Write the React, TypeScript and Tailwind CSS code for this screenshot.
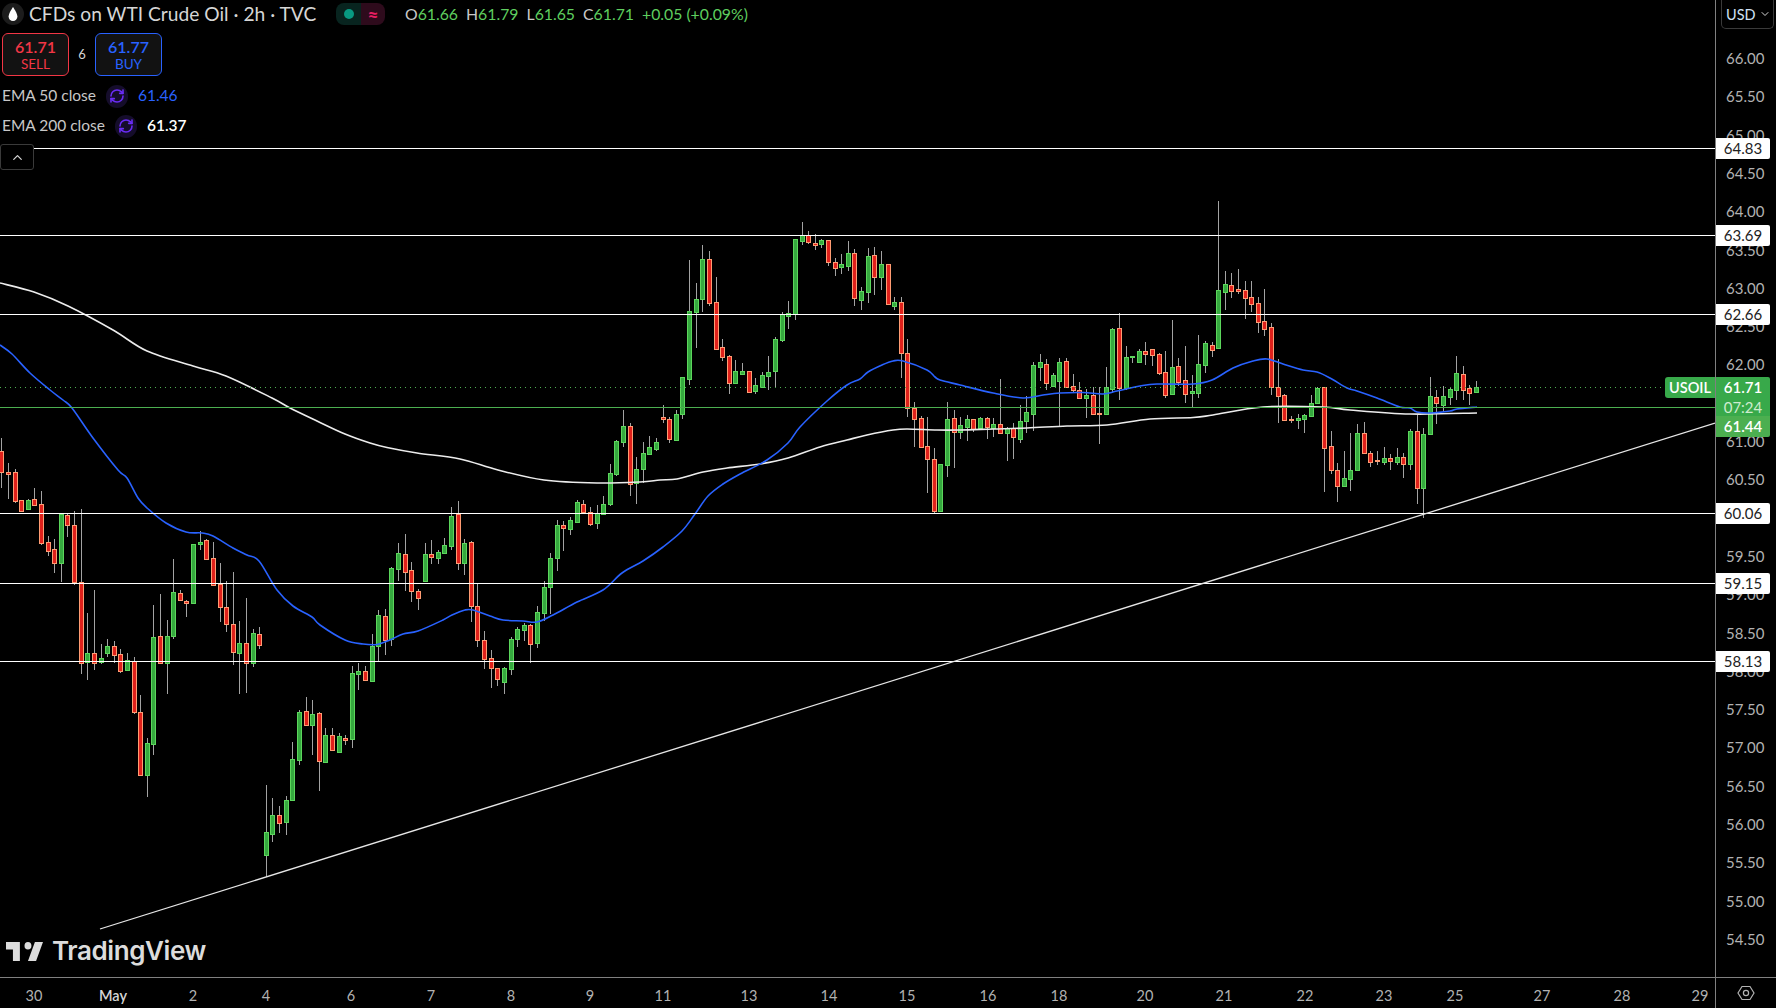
import React from "react";
import { ChevronDown, ChevronUp, RefreshCw } from "lucide-react";

type Row = [number, number, number, number, number, number];
type Candle = { x: number; wt: number; bt: number; bb: number; wb: number; up: boolean };

const batch = (ox: number, oy: number, rows: Row[]): Candle[] =>
  rows.map(([x, wt, bt, bb, wb, c]) => ({
    x: Math.round(ox + x / 3),
    wt: Math.round(oy + wt / 3),
    bt: Math.round(oy + bt / 3),
    bb: Math.round(oy + bb / 3),
    wb: Math.round(oy + wb / 3),
    up: c === 1,
  }));

const candles: Candle[] = [
  ...batch(0, 400, [
    [4, 114, 154, 217, 265, 0], [25, 190, 217, 221, 297, 0], [46, 207, 217, 302, 308, 0], [64, 300, 300, 332, 336, 0],
    [85, 298, 301, 326, 326, 1], [103, 265, 298, 314, 314, 0], [124, 274, 313, 428, 434, 0], [145, 408, 427, 452, 467, 0],
    [163, 418, 448, 488, 518, 0], [184, 343, 343, 488, 545, 1], [202, 343, 346, 374, 410, 0], [223, 334, 376, 545, 555, 0],
    [244, 328, 547, 788, 822, 0], [262, 640, 760, 785, 840, 1], [283, 570, 760, 788, 810, 0], [304, 732, 775, 785, 792, 1],
    [322, 717, 739, 759, 770, 1], [343, 724, 739, 764, 788, 0], [361, 748, 763, 812, 820, 0], [382, 760, 781, 809, 812, 1],
  ]),
  ...batch(125, 640, [
    [28, 52, 64, 215, 222, 0], [46, 165, 217, 404, 408, 0], [67, 294, 310, 404, 471, 1], [85, -105, -9, 311, 345, 1],
  ]),
  ...batch(0, 400, [
    [481, 583, 709, 790, 792, 0], [502, 660, 709, 788, 882, 1], [520, 478, 577, 707, 716, 1], [541, 571, 580, 601, 604, 0],
    [559, 600, 604, 610, 650, 0], [580, 433, 433, 610, 612, 1], [601, 394, 425, 433, 450, 1], [619, 418, 421, 476, 476, 0],
    [640, 426, 475, 556, 558, 0], [661, 490, 553, 622, 666, 0], [679, 544, 622, 673, 696, 0], [700, 517, 673, 755, 795, 0],
    [718, 663, 730, 758, 881, 1], [739, 595, 730, 788, 879, 0], [760, 688, 700, 788, 800, 1], [778, 681, 703, 734, 747, 0],
  ]),
  ...batch(240, 600, [
    [79, 556, 697, 764, 830, 1], [97, 595, 646, 701, 725, 1], [118, 618, 646, 668, 698, 0], [139, 588, 601, 665, 705, 1],
    [157, 426, 478, 599, 600, 1], [178, 330, 337, 479, 495, 1], [199, 292, 334, 374, 378, 0], [217, 300, 343, 374, 465, 1],
    [238, 337, 340, 482, 572, 0], [256, 385, 406, 485, 485, 1], [277, 385, 406, 449, 452, 0], [298, 400, 409, 455, 458, 1],
    [316, 405, 415, 419, 435, 0], [337, 197, 220, 416, 444, 1], [355, 190, 214, 221, 270, 1], [376, 198, 214, 239, 240, 0],
    [397, 102, 139, 242, 242, 1], [415, 30, 46, 137, 187, 1], [436, 27, 49, 119, 165, 0],
  ]),
  ...batch(380, 480, [
    [34, 262, 265, 478, 498, 1], [55, 190, 220, 266, 302, 1], [76, 162, 223, 275, 333, 0], [94, 247, 271, 332, 366, 0],
    [115, 328, 334, 353, 390, 0], [136, 190, 223, 303, 306, 1], [154, 180, 223, 230, 252, 0], [175, 211, 217, 233, 252, 1],
    [193, 175, 196, 218, 218, 1], [214, 82, 109, 197, 210, 1], [235, 64, 103, 250, 270, 0], [253, 178, 190, 248, 285, 1],
    [274, 183, 187, 377, 426, 0], [292, 310, 379, 479, 501, 0], [313, 454, 481, 536, 567, 0], [334, 511, 535, 563, 624, 0],
    [352, 565, 565, 596, 618, 0], [373, 562, 565, 605, 642, 1], [394, 472, 478, 566, 585, 1], [412, 442, 448, 476, 501, 1],
    [433, 430, 436, 449, 483, 1], [451, 433, 436, 491, 548, 0], [472, 378, 397, 488, 504, 1], [493, 304, 322, 398, 423, 1],
    [511, 220, 235, 320, 402, 1], [532, 121, 136, 233, 273, 1], [550, 124, 136, 143, 213, 0], [571, 110, 121, 146, 165, 1],
    [592, 60, 67, 125, 125, 1], [610, 60, 73, 95, 100, 0], [631, 82, 95, 131, 138, 0], [652, 76, 100, 128, 147, 1],
    [670, 48, 73, 101, 105, 1],
  ]),
  ...batch(600, 240, [
    [31, 672, 700, 792, 798, 1], [49, 600, 603, 702, 708, 1], [70, 510, 558, 606, 620, 1], [91, 548, 558, 731, 768, 0],
    [109, 651, 687, 728, 792, 1], [130, 606, 640, 687, 728, 1], [148, 588, 622, 641, 641, 1], [169, 595, 607, 627, 632, 1],
  ]),
  ...batch(660, 210, [
    [10, 585, 622, 627, 640, 0], [28, 620, 628, 686, 698, 0], [49, 600, 613, 689, 690, 1], [67, 502, 502, 613, 627, 1],
    [88, 150, 304, 506, 525, 1], [109, 220, 268, 305, 414, 1], [127, 105, 148, 268, 306, 1], [148, 124, 148, 280, 287, 0],
    [169, 202, 277, 416, 418, 0], [187, 388, 412, 440, 453, 0], [208, 436, 439, 518, 552, 0], [226, 450, 484, 519, 522, 1],
    [247, 460, 484, 491, 495, 1], [268, 482, 484, 545, 545, 0], [286, 504, 526, 542, 552, 1], [307, 487, 496, 530, 534, 1],
    [325, 438, 487, 497, 540, 1], [346, 382, 388, 482, 531, 1], [367, 305, 313, 389, 396, 1], [385, 274, 310, 317, 356, 1],
    [406, 88, 88, 311, 330, 1], [427, 36, 76, 92, 105, 1], [445, 64, 76, 95, 102, 0], [466, 72, 99, 105, 120, 0],
    [484, 86, 91, 101, 114, 1], [505, 91, 91, 155, 168, 0], [526, 143, 157, 173, 198, 0], [544, 132, 163, 170, 192, 1],
    [565, 94, 130, 167, 183, 1], [583, 118, 130, 265, 288, 0], [604, 232, 244, 269, 300, 1], [625, 114, 139, 245, 279, 1],
    [643, 112, 136, 202, 255, 0], [664, 124, 163, 202, 240, 1], [685, 163, 163, 281, 282, 0], [703, 262, 277, 287, 300, 1],
    [724, 262, 277, 430, 504, 0], [742, 388, 430, 593, 621, 0], [763, 576, 593, 626, 711, 0], [784, 618, 625, 712, 712, 0],
    [802, 620, 709, 748, 848, 0], [823, 714, 748, 902, 912, 0], [841, 762, 763, 902, 902, 1], [862, 576, 628, 764, 800, 1],
    [883, 600, 625, 667, 774, 0], [901, 621, 646, 665, 687, 1], [922, 615, 628, 650, 693, 1], [940, 628, 628, 656, 665, 0],
    [961, 620, 625, 653, 654, 1], [982, 620, 625, 650, 687, 0], [1000, 625, 643, 653, 681, 1], [1021, 507, 643, 670, 672, 0],
    [1042, 650, 655, 668, 752, 1], [1060, 640, 655, 682, 747, 0], [1081, 586, 634, 686, 700, 1], [1099, 559, 607, 632, 670, 1],
    [1120, 457, 466, 611, 662, 1], [1141, 432, 457, 470, 513, 1], [1159, 447, 463, 518, 540, 0], [1180, 490, 496, 527, 530, 1],
  ]),
  ...batch(1000, 300, [
    [178, 175, 186, 243, 380, 1], [199, 175, 184, 262, 264, 0], [220, 222, 259, 270, 275, 0], [238, 246, 271, 293, 293, 0],
    [259, 267, 286, 293, 354, 1], [280, 262, 286, 342, 345, 0], [298, 262, 339, 342, 432, 0], [319, 201, 262, 342, 345, 1],
    [337, 85, 87, 266, 279, 1], [358, 40, 85, 263, 300, 0], [379, 138, 172, 263, 270, 1], [397, 168, 168, 172, 188, 1],
    [418, 148, 154, 185, 185, 1], [436, 126, 154, 161, 195, 0], [457, 148, 148, 166, 198, 0], [478, 160, 163, 218, 225, 0],
    [496, 153, 217, 285, 294, 0], [517, 60, 202, 281, 281, 1], [535, 175, 199, 245, 258, 0], [556, 138, 241, 281, 309, 0],
    [577, 225, 274, 278, 322, 1], [595, 105, 193, 278, 294, 1], [616, 123, 130, 194, 219, 1], [637, 125, 136, 149, 171, 0],
  ]),
  ...batch(1180, 180, [
    [115, 64, 331, 503, 507, 1], [136, 274, 313, 335, 390, 1], [154, 280, 316, 332, 354, 0], [175, 267, 327, 332, 342, 0],
    [196, 304, 331, 353, 417, 0], [214, 304, 352, 371, 396, 0], [235, 351, 370, 425, 459, 0], [253, 327, 424, 446, 468, 0],
    [274, 430, 442, 620, 645, 0], [295, 537, 622, 647, 729, 0], [313, 643, 646, 719, 720, 0], [334, 709, 716, 720, 730, 0],
    [355, 702, 714, 719, 748, 1], [373, 702, 706, 716, 758, 1], [394, 645, 670, 707, 708, 1], [412, 622, 625, 668, 668, 1],
    [433, 622, 622, 803, 936, 0], [454, 753, 799, 869, 882, 0], [472, 850, 871, 917, 966, 0], [493, 813, 895, 917, 917, 1],
    [511, 759, 871, 896, 933, 1], [532, 732, 760, 869, 869, 1], [553, 727, 760, 818, 821, 0], [571, 813, 820, 845, 861, 0],
    [592, 813, 840, 843, 855, 0], [613, 801, 835, 845, 855, 1], [631, 822, 835, 842, 870, 0], [652, 805, 832, 846, 855, 1],
    [670, 820, 832, 851, 894, 0], [691, 747, 754, 851, 870, 1], [712, 703, 754, 923, 972, 0], [730, 745, 763, 923, 1014, 1],
    [751, 592, 649, 761, 761, 1], [769, 630, 652, 668, 732, 0], [790, 618, 649, 674, 695, 1], [811, 621, 628, 650, 676, 1],
    [829, 528, 580, 629, 660, 1], [850, 559, 583, 629, 660, 0], [868, 615, 625, 638, 675, 0], [889, 604, 622, 635, 635, 1],
  ]),
];

const ema50 =
  "0,345 12,354 30,373 50,390 63,400 72,408 93,438 118,470 127,478 138,498 147,508 166,523 186,532 202,533 213,536 233,548 247,555 259,561 277,590 293,606 312,617 320,625 345,640 363,644 377,644.5 390,640 403,634 418,631 443,620 452,615 465,610 473,610 490,616 503,620 523,621 537,622 553,615 577,602 603,590 622,573 643,561 663,547 682,531 695,514 708,496 723,484 740,474 767,460 788,443 800,427 827,401 847,385 860,379 868,372 882,365 893,361 903,361 927,370 935,377 940,380 960,385 993,393 1023,398 1043,395 1060,393 1083,392.5 1103,394 1117,391 1140,386 1157,384 1193,384 1212,380 1233,368 1253,361 1267,359 1283,364 1303,370 1317,372 1330,378 1347,388 1357,391 1377,398 1400,407 1410,408 1417,412 1430,413 1450,411 1457,409 1477,407";
const ema200 =
  "0,283 34,292 68,306 113,330 147,351 193,366 226,376 272,398 290,408 317,421 345,434 370,443 387,447.5 417,453 460,459 498,470 544,480 597,483 640,482 660,480 677,479 703,472 727,468 760,464 788,458 820,447 847,440 867,435 893,430 907,429 937,430 960,430 993,429 1027,428 1067,426 1107,425 1150,419 1193,417.5 1213,415 1263,407 1323,407 1350,410 1410,414 1477,413";

// Catmull-Rom smoothing of a hand-read polyline into a cubic path
const smooth = (pts: string): string => {
  const p = pts.split(" ").map((s) => s.split(",").map(Number));
  let d = `M${p[0][0]} ${p[0][1]}`;
  for (let i = 0; i < p.length - 1; i++) {
    const a = p[Math.max(i - 1, 0)];
    const b = p[i];
    const c = p[i + 1];
    const e = p[Math.min(i + 2, p.length - 1)];
    const c1x = b[0] + (c[0] - a[0]) / 6;
    const c1y = b[1] + (c[1] - a[1]) / 6;
    const c2x = c[0] - (e[0] - b[0]) / 6;
    const c2y = c[1] - (e[1] - b[1]) / 6;
    d += `C${c1x} ${c1y} ${c2x} ${c2y} ${c[0]} ${c[1]}`;
  }
  return d;
};

const levels = [
  { y: 148, label: "64.83" },
  { y: 235, label: "63.69" },
  { y: 314, label: "62.66" },
  { y: 513, label: "60.06" },
  { y: 583, label: "59.15" },
  { y: 661, label: "58.13" },
];

const ticks = [
  "66.00", "65.50", "65.00", "64.50", "64.00", "63.50", "63.00", "62.50", "62.00", "61.50", "61.00", "60.50",
  "60.00", "59.50", "59.00", "58.50", "58.00", "57.50", "57.00", "56.50", "56.00", "55.50", "55.00", "54.50",
];
const hiddenTicks = ["61.50", "60.00"];

const dates: [string, number][] = [
  ["30", 34], ["May", 113], ["2", 193], ["4", 266], ["6", 351], ["7", 431], ["8", 511], ["9", 590], ["11", 663], ["13", 749],
  ["14", 829], ["15", 907], ["16", 988], ["18", 1059], ["20", 1145], ["21", 1224], ["22", 1305], ["23", 1384], ["25", 1455],
  ["27", 1542], ["28", 1622], ["29", 1700],
];

function Chart() {
  return (
    <svg width={1715} height={977} className="block">
      <g shapeRendering="crispEdges">
        {candles.map((c, i) => (
          <g key={i}>
            <rect x={c.x} y={c.wt} width={1} height={Math.max(c.wb - c.wt, 1)} fill="#a3a3a3" />
            <rect
              x={c.x - 1.5}
              y={c.bt + 0.5}
              width={4}
              height={Math.max(c.bb - c.bt, 1)}
              fill={c.up ? "#36a93f" : "#e0211b"}
              stroke={c.up ? "#5cd65c" : "#ff9c73"}
              strokeWidth={1}
            />
          </g>
        ))}
      </g>
      <path d={smooth(ema200)} fill="none" stroke="#ececec" strokeWidth={1.6} strokeLinejoin="round" />
      <path d={smooth(ema50)} fill="none" stroke="#2962ff" strokeWidth={1.6} strokeLinejoin="round" />
      <g shapeRendering="crispEdges">
        {levels.map((l) => (
          <line key={l.y} x1={0} x2={1715} y1={l.y + 0.5} y2={l.y + 0.5} stroke="#ffffff" strokeWidth={1} />
        ))}
        <line x1={0} x2={1665} y1={387.5} y2={387.5} stroke="#4caf50" strokeWidth={1} strokeDasharray="1 4" />
        <line x1={0} x2={1715} y1={407.5} y2={407.5} stroke="#4caf50" strokeWidth={1} />
      </g>
      <line x1={100} y1={929} x2={1715} y2={423} stroke="#e6e6e6" strokeWidth={1.3} />
    </svg>
  );
}

function TradeButton({ price, label, color }: { price: string; label: string; color: "red" | "blue" }) {
  const red = color === "red";
  return (
    <div
      className={
        red
          ? "flex h-[43px] w-[67px] flex-col items-center justify-center rounded-md border border-[#f23645] bg-[#121212] text-[#f23645]"
          : "flex h-[43px] w-[67px] flex-col items-center justify-center rounded-md border border-[#2962ff] bg-[#121212] text-[#2962ff]"
      }
    >
      <span className="text-[16px] leading-[18px] font-semibold">{price}</span>
      <span className="text-[13.5px] leading-[16px]">{label}</span>
    </div>
  );
}

function EmaRow({ name, value, valueClass }: { name: string; value: string; valueClass: string }) {
  return (
    <div className="flex h-[30px] items-center pl-[2px] text-[15.5px] text-[#c8c8c8]">
      <span>{name}</span>
      <span className="ml-[10px] flex h-[23px] w-[22px] items-center justify-center rounded-full bg-[#150d2b]">
        <RefreshCw size={16} color="#6a2cf5" strokeWidth={2.4} />
      </span>
      <span className={valueClass}>{value}</span>
    </div>
  );
}

function Ohlc({ k, v }: { k: string; v: string }) {
  return (
    <span className="mr-[8px]">
      <span className="text-[#c8c8c8]">{k}</span>
      <span className="text-[#5fce5f]">{v}</span>
    </span>
  );
}

function Legend() {
  return (
    <div className="absolute top-0 left-0 flex flex-col">
      <div className="flex h-[28px] items-center">
        <span className="ml-[2px] flex h-[22px] w-[22px] items-center justify-center rounded-full bg-[#1c1c1c]">
          <svg width="10" height="15" viewBox="0 0 10 15">
            <path d="M5 0C5 0 .6 6.2.6 9.6a4.4 4.4 0 0 0 8.8 0C9.4 6.2 5 0 5 0Z" fill="#ffffff" />
          </svg>
        </span>
        <span className="ml-[5px] w-[286px] text-[19.2px] whitespace-nowrap text-[#d6d6d6]">CFDs on WTI Crude Oil · 2h · TVC</span>
        <span className="ml-[21px] flex h-[22px] w-[49px] overflow-hidden rounded-[8px]">
          <span className="flex w-[25px] items-center justify-center bg-[#08241f]">
            <span className="h-[10px] w-[10px] rounded-full bg-[#089981]" />
          </span>
          <span className="flex w-[24px] items-center justify-center bg-[#2e0b1c] text-[19px] leading-none font-bold text-[#e91e63]">≈</span>
        </span>
        <span className="ml-[20px] text-[15.8px] whitespace-nowrap">
          <Ohlc k="O" v="61.66" />
          <Ohlc k="H" v="61.79" />
          <Ohlc k="L" v="61.65" />
          <Ohlc k="C" v="61.71" />
          <span className="text-[#5fce5f]">+0.05 (+0.09%)</span>
        </span>
      </div>
      <div className="mt-[5px] flex items-center pl-[2px]">
        <TradeButton price="61.71" label="SELL" color="red" />
        <span className="w-[26px] text-center text-[13px] text-[#d6d6d6]">6</span>
        <TradeButton price="61.77" label="BUY" color="blue" />
      </div>
      <div className="mt-[5px]">
        <EmaRow name="EMA 50 close" value="61.46" valueClass="ml-[10px] text-[#2962ff]" />
        <EmaRow name="EMA 200 close" value="61.37" valueClass="ml-[10px] font-semibold text-white" />
      </div>
      <button className="mt-[3px] flex h-[26px] w-[34px] items-center justify-center rounded-[3px] border border-[#3a3a3a] bg-black">
        <ChevronUp size={15} color="#d6d6d6" />
      </button>
    </div>
  );
}

function Logo() {
  return (
    <div className="absolute top-[938px] left-[6px] flex items-center">
      <svg width="37" height="19" viewBox="2 6 32 15" preserveAspectRatio="none">
        <path d="M14 6H2v6h6v9h6V6Zm14 15h-7l6-15h7l-6 15Zm-7-9a3 3 0 1 0 0-6 3 3 0 0 0 0 6Z" fill="#dcdcdc" />
      </svg>
      <span className="ml-[9px] font-['Inter',sans-serif] text-[26px] leading-[26px] font-semibold tracking-[-0.4px] text-[#dcdcdc]">TradingView</span>
    </div>
  );
}

function PriceAxis() {
  return (
    <div className="relative w-[61px] border-l border-[#808080] text-[15px] leading-[21px]">
      <div className="absolute top-0 right-[2px] z-20 flex h-[29px] w-[53px] items-center justify-between rounded-b-[5px] border border-t-0 border-[#3a3a3a] bg-black pr-[2px] pl-[4px] text-[14.5px] text-[#cfe0f5]">
        <span>USD</span>
        <ChevronDown size={12} color="#d6d6d6" />
      </div>
      {ticks.map((t, i) =>
        hiddenTicks.includes(t) ? null : (
          <span key={t} className="absolute left-[10px] text-[#b2b2b2]" style={{ top: 59 + i * 38.3 - 11 }}>
            {t}
          </span>
        ),
      )}
      {levels.map((l) => (
        <span
          key={l.y}
          className="absolute left-0 z-10 flex h-[21px] w-[54px] items-center justify-center rounded-r-[2px] bg-white text-[#222222]"
          style={{ top: l.y - 10 }}
        >
          {l.label}
        </span>
      ))}
      <div className="absolute top-[377px] left-0 z-10 flex h-[39px] w-[54px] flex-col items-center rounded-tr-[2px] bg-[#38a94a] font-semibold text-white">
        <span className="leading-[21px]">61.71</span>
        <span className="leading-[18px] font-normal text-[#cfeccf]">07:24</span>
      </div>
      <div className="absolute top-[416px] left-0 z-10 flex h-[21px] w-[54px] items-center justify-center rounded-br-[2px] bg-[#4caf50] font-semibold text-white">
        61.44
      </div>
    </div>
  );
}

function TimeAxis() {
  return (
    <div className="relative flex-1 text-[14.5px] text-[#b2b2b2]">
      {dates.map(([d, x]) => (
        <span
          key={d}
          className={d === "May" ? "absolute top-[7px] -translate-x-1/2 font-semibold text-[#d6d6d6]" : "absolute top-[7px] -translate-x-1/2"}
          style={{ left: x }}
        >
          {d}
        </span>
      ))}
    </div>
  );
}

export default function App() {
  return (
    <div className="relative flex h-[1008px] w-[1776px] flex-col overflow-hidden bg-black font-['Lato','Noto_Sans',sans-serif]">
      <div className="flex h-[977px]">
        <div className="relative w-[1715px]">
          <Chart />
          <Legend />
          <Logo />
          <div className="absolute top-[377px] left-[1665px] flex h-[21px] w-[50px] items-center justify-center rounded-l-[3px] bg-[#38a94a] text-[14.5px] font-semibold text-white">
            USOIL
          </div>
        </div>
        <PriceAxis />
      </div>
      <div className="flex h-[31px] border-t border-[#808080]">
        <TimeAxis />
        <div className="flex w-[61px] items-center justify-center border-l border-[#808080]">
          <svg width="18" height="18" viewBox="0 0 18 18" fill="none" stroke="#b2b2b2" strokeWidth="1.2">
            <path d="M5 2.5h8L17 9l-4 6.5H5L1 9l4-6.5Z" />
            <circle cx="9" cy="9" r="2.6" />
          </svg>
        </div>
      </div>
    </div>
  );
}
